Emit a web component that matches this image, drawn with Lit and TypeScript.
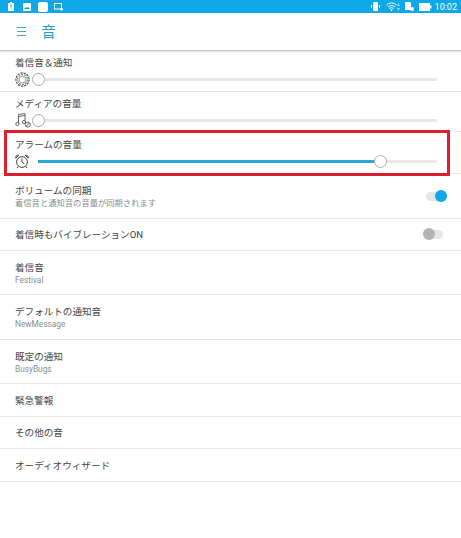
import { LitElement, html, css, svg } from "lit";
import { customElement } from "lit/decorators.js";

const ring = svg`<svg width="15" height="15" viewBox="0 0 15 15" fill="none" stroke="#444" stroke-width="1.1"><circle cx="7.5" cy="7.5" r="6.6" stroke-dasharray="2.2 1"/><circle cx="7.5" cy="7.5" r="4.9" stroke="#777" stroke-dasharray="2 1"/><circle cx="7.5" cy="7.5" r="3.2" stroke="#aaa"/></svg>`;
const note = svg`<svg width="17" height="16" viewBox="0 0 17 16" fill="none" stroke="#555" stroke-width=".9"><path d="M3.5 11.5V2.5L10 1.5V9.5"/><path d="M3.5 4.5L10 3.5"/><circle cx="2.4" cy="12" r="1.6"/><circle cx="9" cy="10" r="1.6"/><circle cx="12.8" cy="12.6" r="2.5"/><path d="M11 14.4L14.6 10.8"/></svg>`;
const clock = svg`<svg width="14" height="15" viewBox="0 0 14 15" fill="none" stroke="#444" stroke-width="1"><circle cx="7" cy="8" r="5.4"/><path d="M7 4.6V8.2L9.4 10"/><path d="M.8 4.2C.4 2.2 1.8 .8 3.8 1.2ZM13.2 4.2C13.6 2.2 12.2 .8 10.2 1.2Z"/><path d="M3.2 12.4L2 14.2M10.8 12.4L12 14.2"/></svg>`;

@customElement("app-root")
export class AppRoot extends LitElement {
  static styles = css`
    :host { display: block; width: 461px; height: 538px; background: #fff; position: relative; overflow: hidden;
      font-family: "Roboto", "Noto Sans CJK JP", sans-serif; color: #444; }
    .status { height: 13px; background: #0ea8e8; display: flex; align-items: center; padding: 0 4px 0 8px; color: #fff; }
    .status .spacer { flex: 1; }
    .time { font: 9px "Roboto", sans-serif; color: #fff; margin-left: 3px; }
    .status svg { display: block; flex: none; }
    .m9 { margin-left: 9px; }
    .m7 { margin-left: 7px; }
    .m6 { margin-left: 6px; }
    .m5 { margin-left: 5px; }
    .m0 { margin-left: 0; }
    .head { height: 37px; display: flex; align-items: center; border-bottom: 1px solid #c4c4c4; box-shadow: 0 1px 1px #e4e4e4; position: relative; }
    .menu { width: 9px; margin-left: 17px; display: flex; flex-direction: column; gap: 2.6px; }
    .menu i { display: block; height: 1px; background: #3fa9d6; }
    .title { margin-left: 15px; font-size: 15px; line-height: 20px; color: #2a9ccf; }
    .row { border-bottom: 1px solid #e8e8e8; padding-left: 15px; box-sizing: border-box; display: flex; flex-direction: column; justify-content: center; }
    .row.sub { padding-top: 1px; }
    .t { font-size: 9.6px; line-height: 13px; color: #444; letter-spacing: -0.02px; }
    .s { font-size: 8.3px; line-height: 11px; color: #8c8c8c; padding-top: 1px; }
    .sl { justify-content: flex-start; padding-top: 5px; }
    .sl.low { padding-top: 6px; }
    .sr { display: flex; align-items: center; height: 16px; margin-top: 2px; padding-right: 24px; }
    .ic { width: 23px; flex: none; display: flex; align-items: center; }
    .track { flex: 1; height: 3px; background: #e8e8e8; position: relative; }
    .fill { position: absolute; left: 0; top: 0; bottom: 0; background: #2ba6d8; }
    .thumb { position: absolute; top: -5px; width: 13px; height: 13px; border: 1px solid #aaa; border-radius: 50%; background: #fff; box-sizing: border-box; }
    .tog { position: relative; flex-direction: row; justify-content: space-between; align-items: center; padding-right: 18px; }
    .sw { width: 17px; height: 9px; border-radius: 5px; background: #e6e6e6; position: relative; }
    .sw b { position: absolute; top: -2px; width: 12px; height: 12px; border-radius: 50%; }
    .sw.on b { right: -4px; background: #0ea8e8; }
    .sw.off b { left: -3px; background: #b4b4b4; }
    .red { position: absolute; left: 4px; top: 130px; width: 446px; height: 46px; border: 3px solid #dc1f2e; box-sizing: border-box; }
  `;

  private slider(icon: unknown, label: string, pct: number, h: number, low = false) {
    return html`<div class="row sl ${low ? "low" : ""}" style="height:${h}px">
      <div class="t">${label}</div>
      <div class="sr"><div class="ic">${icon}</div>
        <div class="track"><div class="fill" style="width:${pct}%"></div><div class="thumb" style="left:${pct - 1.6}%"></div></div>
      </div></div>`;
  }
  private item(title: string, sub: string, h: number) {
    return html`<div class="row ${sub ? "sub" : ""}" style="height:${h}px"><div class="t">${title}</div>${sub ? html`<div class="s">${sub}</div>` : ""}</div>`;
  }

  render() {
    return html`
      <div class="status">
        <svg width="6" height="9" viewBox="0 0 6 9"><path fill="#fff" d="M0 1h2V0h2v1h2v8H0z"/><path fill="#0ea8e8" d="M2.5 2.5h1v3h-1zM2.5 6.5h1v1h-1z"/></svg>
        <svg class="m9" width="8" height="8" viewBox="0 0 8 8"><rect width="8" height="8" rx="1" fill="#fff"/><path d="M1 6l2-2 1 1 1-1 2 2z" fill="#0ea8e8"/></svg>
        <svg class="m7" width="10" height="10" viewBox="0 0 10 10"><rect width="10" height="10" rx="2" fill="#fff"/></svg>
        <svg class="m6" width="9" height="8" viewBox="0 0 9 8"><rect x=".5" y=".5" width="7" height="5.5" fill="none" stroke="#fff"/><circle cx="7.5" cy="6" r="1.5" fill="#fff"/></svg>
        <div class="spacer"></div>
        <svg width="9" height="9" viewBox="0 0 9 9"><rect x="2" y="0" width="5" height="9" rx="1" fill="#fff"/><path d="M.5 3v3M8.5 3v3" stroke="#fff"/></svg>
        <svg class="m6" width="11" height="9" viewBox="0 0 11 9" fill="none" stroke="#fff"><path d="M.5 3a7 7 0 0 1 10 0M2 5a5 5 0 0 1 7 0M3.5 6.5a3 3 0 0 1 4 0"/><circle cx="5.5" cy="8" r=".6" fill="#fff"/></svg>
        <svg class="m0" width="3" height="8" viewBox="0 0 3 8" fill="#9adcf5"><path d="M1.5 0L3 3H0zM1.5 8L0 5h3z"/></svg>
        <svg class="m5" width="9" height="9" viewBox="0 0 9 9"><path d="M0 0h5l1 1v7H0z" fill="#fff"/><circle cx="7" cy="7" r="2" fill="#fff"/></svg>
        <svg class="m5" width="13" height="8" viewBox="0 0 13 8"><rect width="11" height="8" fill="#fff"/><rect x="11" y="2.5" width="1.5" height="3" fill="#fff"/></svg>
        <span class="time">10:02</span>
      </div>
      <div class="head"><div class="menu"><i></i><i></i><i></i></div><div class="title">音</div></div>
      ${this.slider(ring, "着信音＆通知", 0, 41)}
      ${this.slider(note, "メディアの音量", 0, 40)}
      ${this.slider(clock, "アラームの音量", 85.7, 42, true)}
      <div class="row tog sub" style="height:45px"><div><div class="t">ボリュームの同期</div><div class="s">着信音と通知音の音量が同期されます</div></div><div class="sw on"><b></b></div></div>
      <div class="row tog" style="height:32px"><div class="t">着信時もバイブレーションON</div><div class="sw off"><b></b></div></div>
      ${this.item("着信音", "Festival", 44)}
      ${this.item("デフォルトの通知音", "NewMessage", 45)}
      ${this.item("既定の通知", "BusyBugs", 44)}
      ${this.item("緊急警報", "", 33)}
      ${this.item("その他の音", "", 32)}
      ${this.item("オーディオウィザード", "", 33)}
      <div class="red"></div>
    `;
  }
}
